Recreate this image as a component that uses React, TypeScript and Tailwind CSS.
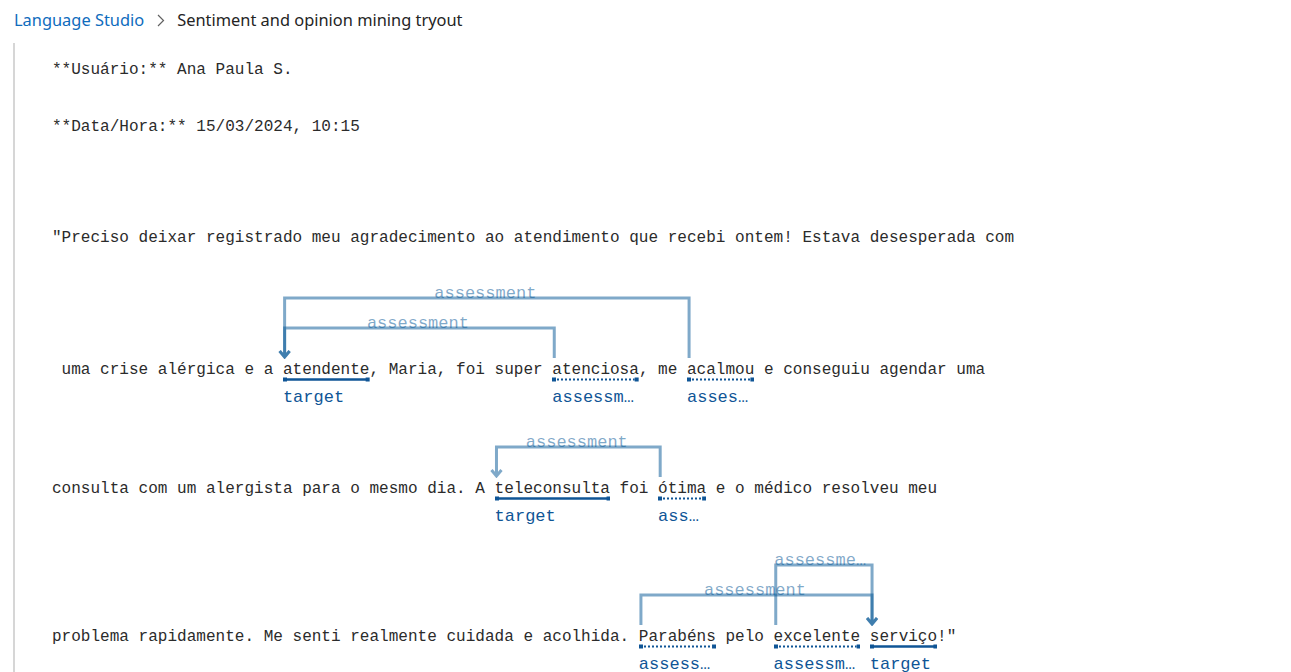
import React from "react";

const CW = 9.63; // Liberation Mono @ 16.05px
const ARC = "rgba(0,84,148,0.5)";
const DARK = "#0f5596";

type Mark = { at: number; len: number; kind: "target" | "assessment" };
type Arc = { from: number; to: number; level: number };
type Line = {
  text: string;
  cls: string;
  pad?: number;
  marks?: Mark[];
  arcs?: Arc[];
};

const lines: Line[] = [
  { text: "**Usuário:** Ana Paula S.", cls: "" },
  { text: "**Data/Hora:** 15/03/2024, 10:15", cls: "mt-[33px]" },
  { text: "", cls: "mt-[31px]" },
  {
    text: "\"Preciso deixar registrado meu agradecimento ao atendimento que recebi ontem! Estava desesperada com",
    cls: "mt-[32px]",
  },
  {
    text: " uma crise alérgica e a atendente, Maria, foi super atenciosa, me acalmou e conseguiu agendar uma",
    cls: "mt-[32px] pt-[76px]",
    pad: 76,
    marks: [
      { at: 24, len: 9, kind: "target" },
      { at: 52, len: 9, kind: "assessment" },
      { at: 66, len: 7, kind: "assessment" },
    ],
    arcs: [
      { from: 66, to: 24, level: 2 },
      { from: 52, to: 24, level: 1 },
    ],
  },
  {
    text: "consulta com um alergista para o mesmo dia. A teleconsulta foi ótima e o médico resolveu meu",
    cls: "mt-[49px] pt-[46px]",
    pad: 46,
    marks: [
      { at: 46, len: 12, kind: "target" },
      { at: 63, len: 5, kind: "assessment" },
    ],
    arcs: [{ from: 63, to: 46, level: 1 }],
  },
  {
    text: "problema rapidamente. Me senti realmente cuidada e acolhida. Parabéns pelo excelente serviço!\"",
    cls: "mt-[48px] pt-[76px]",
    pad: 76,
    marks: [
      { at: 61, len: 8, kind: "assessment" },
      { at: 75, len: 9, kind: "assessment" },
      { at: 85, len: 7, kind: "target" },
    ],
    arcs: [
      { from: 75, to: 85, level: 2 },
      { from: 61, to: 85, level: 1 },
    ],
  },
];

function Underline({ width, solid }: { width: number; solid: boolean }) {
  return (
    <svg
      className="absolute left-0 top-[19px]"
      width={width}
      height={5}
      viewBox={`0 0 ${width} 5`}
    >
      {solid ? (
        <line x1={2} y1={2.5} x2={width - 2} y2={2.5} stroke={DARK} strokeWidth={2.5} />
      ) : (
        <line
          x1={5}
          y1={2.5}
          x2={width - 4}
          y2={2.5}
          stroke={DARK}
          strokeWidth={2}
          strokeDasharray="2 2"
        />
      )}
      <rect x={0} y={0.5} width={4} height={4} fill={DARK} />
      <rect x={width - 4} y={0.5} width={4} height={4} fill={DARK} />
    </svg>
  );
}

function Word({ word, mark }: { word: string; mark: Mark }) {
  const w = mark.len * CW;
  return (
    <span className="relative inline-block">
      {word}
      <Underline width={w} solid={mark.kind === "target"} />
      <span
        className="absolute left-0 top-[30px] truncate text-[17px] leading-5 text-[#0f5596]"
        style={{ width: w }}
      >
        {mark.kind}
      </span>
    </span>
  );
}

function Arcs({ arcs, pad }: { arcs: Arc[]; pad: number }) {
  return (
    <>
      <svg className="absolute left-0 top-0" width={1000} height={pad + 1}>
        {arcs.map((a, i) => {
          const xs = a.from * CW + 1.5;
          const xt = a.to * CW + 1.5;
          const y = pad - 30 * a.level;
          return (
            <path
              key={i}
              d={`M ${xs} ${pad} V ${y} H ${xt} V ${pad - 1} M ${xt - 5} ${pad - 7} L ${xt} ${pad - 1} L ${xt + 5} ${pad - 7}`}
              fill="none"
              stroke={ARC}
              strokeWidth={3}
            />
          );
        })}
      </svg>
      {arcs.map((a, i) => {
        const xs = a.from * CW;
        const xt = a.to * CW;
        const y = pad - 30 * a.level;
        return (
          <div
            key={i}
            className="absolute truncate text-center text-[17px] leading-5"
            style={{
              left: Math.min(xs, xt),
              width: Math.abs(xs - xt),
              top: y - 14,
              color: ARC,
            }}
          >
            assessment
          </div>
        );
      })}
    </>
  );
}

function TextLine({ line }: { line: Line }) {
  const parts: React.ReactNode[] = [];
  let pos = 0;
  (line.marks ?? []).forEach((m, i) => {
    if (m.at > pos) parts.push(line.text.slice(pos, m.at));
    parts.push(<Word key={i} word={line.text.slice(m.at, m.at + m.len)} mark={m} />);
    pos = m.at + m.len;
  });
  parts.push(line.text.slice(pos));

  return (
    <div className={`relative ${line.cls}`}>
      {line.arcs && <Arcs arcs={line.arcs} pad={line.pad ?? 0} />}
      <div className="h-6 whitespace-pre text-[16.05px] leading-6 text-[#2b2b2b]">
        {parts}
      </div>
    </div>
  );
}

export default function App() {
  return (
    <div className="h-[672px] w-full overflow-hidden bg-white">
      {/* Breadcrumb */}
      <div className="flex h-10 items-center px-[14px] font-['Noto_Sans',sans-serif] text-[16.4px]">
        <span className="text-[#0f6cbd]">Language Studio</span>
        <svg className="ml-[13px] mr-[12px]" width="8" height="13" viewBox="0 0 8 13">
          <path d="M1 1 L6.5 6.5 L1 12" fill="none" stroke="#616161" strokeWidth="1.2" />
        </svg>
        <span className="text-[#242424]">Sentiment and opinion mining tryout</span>
      </div>

      {/* Document */}
      <div className="ml-[13px] mt-[3px] min-h-[629px] border-l-2 border-[#d6d6d6] pl-[37px] pt-[15px] font-['Liberation_Mono',monospace]">
        {lines.map((line, i) => (
          <TextLine key={i} line={line} />
        ))}
      </div>
    </div>
  );
}
